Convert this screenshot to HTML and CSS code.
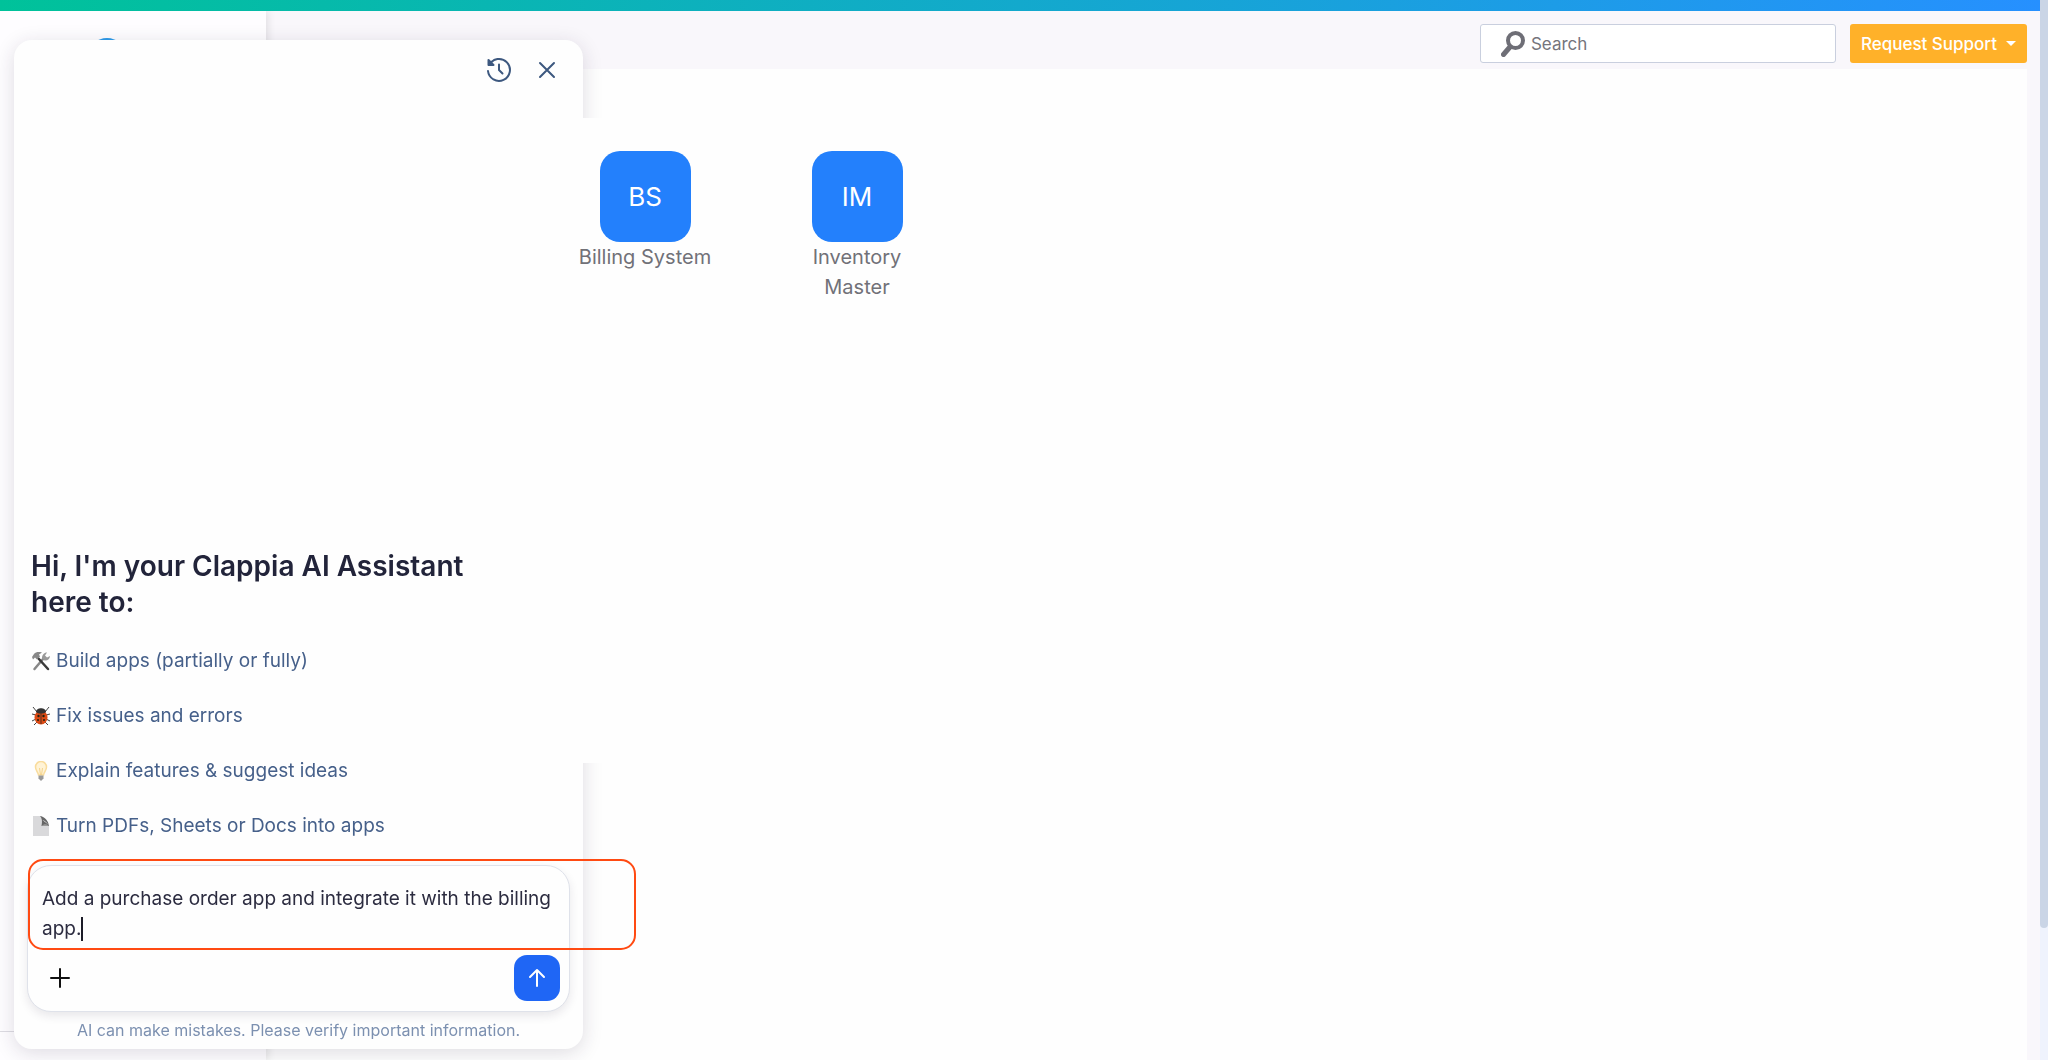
FILE: index.html
```html
<!DOCTYPE html>
<html lang="en">
<head>
<meta charset="utf-8">
<title>Clappia</title>
<link rel="stylesheet" href="styles.css">
</head>
<body>
<div class="page">
  <div class="window">
    <div class="topbar"></div>
    <div class="shell">
      <aside class="sidebar">
        <span class="logo"></span>
        <div class="sidebar-foot"></div>
      </aside>
      <div class="main">
        <header class="header">
          <label class="search">
            <svg class="search-icon" viewBox="0 0 24 26" aria-hidden="true"><circle cx="14.500" cy="9.500" r="7.500" fill="none" stroke="currentColor" stroke-width="4"/><path d="M8.500 16.500L2.500 23.500" stroke="currentColor" stroke-width="5" stroke-linecap="round"/></svg>
            <input class="search-input" type="search" placeholder="Search" aria-label="Search">
          </label>
          <button class="support" type="button">Request Support<span class="support-caret"></span></button>
        </header>
        <main class="content">
          <section class="apps">
            <a class="app" href="#"><span class="app-tile">BS</span><span class="app-name">Billing System</span></a>
            <a class="app" href="#"><span class="app-tile">IM</span><span class="app-name">Inventory Master</span></a>
          </section>
        </main>
      </div>
    </div>
  </div>
  <div class="scroll-track"><div class="scroll-thumb"></div></div>
</div>

<section class="assistant">
  <div class="assistant-bar">
    <button class="icon-button" type="button" aria-label="History">
      <svg viewBox="0 0 28 28" width="28" height="28" fill="none" stroke="currentColor" stroke-width="2" stroke-linecap="round" stroke-linejoin="round"><path d="M4.200 8.800A11 11 0 1 1 3 15"/><path d="M3.500 4v5h5z" fill="currentColor"/><path d="M14 8.500v5.500l3.500 3.500"/></svg>
    </button>
    <button class="icon-button" type="button" aria-label="Close">
      <svg viewBox="0 0 28 28" width="28" height="28" fill="none" stroke="currentColor" stroke-width="2" stroke-linecap="round"><path d="M7 7l14 14M21 7L7 21"/></svg>
    </button>
  </div>
  <div class="intro">
    <h1 class="intro-title">Hi, I'm your Clappia AI Assistant here to:</h1>
    <ul class="skills">
      <li class="skill">
        <svg class="skill-icon" viewBox="0 0 20 20" aria-hidden="true"><path d="M3.500 18L12 8" stroke="#888" stroke-width="2.500" stroke-linecap="round"/><path d="M11 7c0-3 2-5.500 5-5.500l-2 3 2 2 3-1.500c0 3-2.500 5-5.500 4.500z" fill="#999"/><path d="M7 7l10 11" stroke="#3a3a3a" stroke-width="2.500" stroke-linecap="round"/><path d="M1 6l2-3c2-2 4-2.500 8-1.500L8 3.500l1 2-3 3-2-2-2 2z" fill="#888"/></svg>
        Build apps (partially or fully)
      </li>
      <li class="skill">
        <svg class="skill-icon" viewBox="0 0 20 20" aria-hidden="true"><path d="M6 6L2 1M14 6l4-5M5 9L1 8M15 9l4-1M5 13l-4 2M15 13l4 2M6 16l-3 3M14 16l3 3" stroke="#444" fill="none"/><ellipse cx="10" cy="11.500" rx="6.500" ry="7" fill="#dc4a14"/><path d="M5 6c0-5 10-5 10 0-2 2-8 2-10 0z" fill="#333"/><path d="M10 7v11" stroke="#532" /><circle cx="7.500" cy="10" r="1.200" fill="#221"/><circle cx="12.500" cy="10" r="1.200" fill="#221"/><circle cx="7" cy="14" r="1" fill="#221"/><circle cx="13" cy="14" r="1" fill="#221"/></svg>
        Fix issues and errors
      </li>
      <li class="skill">
        <svg class="skill-icon" viewBox="0 0 20 20" aria-hidden="true"><path d="M7.500 14C7 11 4.500 9.500 4.500 6a5.500 5.500 0 0 1 11 0c0 3.500-2.500 5-3 8z" fill="#fff3d6" stroke="#f9dc9c" stroke-width="1.500"/><path d="M8.500 7l1 7M11.500 7l-1 7" stroke="#f5d48c" fill="none"/><path d="M7.500 14.500h5v3L10 20l-2.500-2.500z" fill="#999"/></svg>
        Explain features &amp; suggest ideas
      </li>
      <li class="skill">
        <svg class="skill-icon" viewBox="0 0 20 20" aria-hidden="true"><path d="M2 0h9l7 10v10H2z" fill="#d9d9db"/><path d="M9 0c2 2 2.500 5 1.500 10l7.500 0C17.500 5 14 1 9 0z" fill="#666"/><path d="M11.500 4C13 4 16 7 18 9z" fill="#fefefe"/><path d="M10.500 10C13 7.500 16 8 18 10z" fill="#999"/></svg>
        Turn PDFs, Sheets or Docs into apps
      </li>
    </ul>
  </div>
  <form class="composer">
    <div class="prompt">
      <textarea class="prompt-input" rows="2" aria-label="Message">Add a purchase order app and integrate it with the billing app.</textarea>
      <span class="prompt-caret"></span>
    </div>
    <div class="composer-actions">
      <button class="attach" type="button" aria-label="Attach">
        <svg viewBox="0 0 20 20" width="20" height="20" fill="none" stroke="currentColor" stroke-width="2" stroke-linecap="round"><path d="M10 1v18M1 10h18"/></svg>
      </button>
      <button class="send" type="button" aria-label="Send">
        <svg viewBox="0 0 20 20" width="20" height="20" fill="none" stroke="currentColor" stroke-width="2" stroke-linecap="round" stroke-linejoin="round"><path d="M10 18V2M3 9l7-7 7 7"/></svg>
      </button>
    </div>
    <div class="highlight"></div>
  </form>
  <p class="disclaimer">AI can make mistakes. Please verify important information.</p>
</section>
</body>
</html>
```
FILE: styles.css
```css
* {
  box-sizing: border-box;
}

body {
  margin: 0;
  font-family: Inter, "Liberation Sans", sans-serif;
  background: #f9f7fb;
  overflow: hidden;
}

button {
  font: inherit;
  color: inherit;
  border: 0;
  padding: 0;
  background: none;
}

.page {
  display: flex;
  height: 100vh;
}

.window {
  flex: 1;
  display: flex;
  flex-direction: column;
}

.topbar {
  height: 11px;
  background: linear-gradient(90deg, #00c29a, #2690ff);
}

.shell {
  flex: 1;
  display: flex;
}

.sidebar {
  width: 266px;
  padding-top: 27px;
  display: flex;
  flex-direction: column;
  justify-content: space-between;
  background: #fefdff;
  box-shadow: 2px 0 8px rgba(0, 0, 0, 0.1);
  clip-path: inset(0 -12px 0 0);
}

.logo {
  width: 38px;
  height: 38px;
  margin-left: 88px;
  border-radius: 50%;
  background: #2e9bea;
}

.sidebar-foot {
  height: 29px;
  border-top: 1px solid #dddce2;
}

.main {
  flex: 1;
  display: flex;
  flex-direction: column;
}

.header {
  height: 58px;
  padding: 13px 13px 0 0;
  display: flex;
  align-items: flex-start;
  justify-content: flex-end;
  gap: 14px;
}

.search {
  width: 356px;
  height: 39px;
  padding: 0 20px;
  display: flex;
  align-items: center;
  gap: 6px;
  border: 1px solid #c9cfde;
  border-radius: 3px;
  background: #fff;
  color: #6e6e76;
}

.search-icon {
  width: 24px;
  height: 26px;
}

.search-input {
  flex: 1;
  min-width: 0;
  padding: 0;
  border: 0;
  background: none;
  font: 17px Inter, "Liberation Sans", sans-serif;
  font-optical-sizing: none;
  color: inherit;
}

.search-input::placeholder {
  color: #75757c;
}

.support {
  height: 39px;
  padding: 0 11px;
  display: flex;
  align-items: center;
  gap: 9px;
  border-radius: 3px;
  background: #ffb129;
  color: #fff;
  font-size: 17px;
  font-weight: 500;
}

.support-caret {
  border: 5px solid transparent;
  border-top-color: #fff;
  border-bottom: 0;
}

.content {
  flex: 1;
  margin-right: 13px;
  padding-top: 49px;
  background: #fefefe;
}

.apps {
  position: relative;
  z-index: 2;
  height: 645px;
  margin-left: 273px;
  padding-top: 33px;
  display: flex;
  background: #fefefe;
}

.app {
  width: 212px;
  padding: 0 36px;
  display: flex;
  flex-direction: column;
  align-items: center;
  text-align: center;
  text-decoration: none;
  color: #717178;
}

.app:last-child {
  padding: 0 48px;
}

.app-tile {
  width: 91px;
  height: 91px;
  display: grid;
  place-items: center;
  border-radius: 20px;
  background: #2380fc;
  color: #fff;
  font-size: 26px;
}

.app-name {
  font-size: 20px;
  line-height: 30px;
}

.scroll-track {
  width: 8px;
  background: #eff3fd;
}

.scroll-thumb {
  height: 928px;
  border-radius: 0 0 4px 4px;
  background: #cad5e6;
}

.assistant {
  position: fixed;
  z-index: 1;
  top: 40px;
  bottom: 11px;
  left: 14px;
  width: 569px;
  padding: 12px 13px 7px;
  display: flex;
  flex-direction: column;
  border-radius: 18px;
  background: #fefefe;
  box-shadow: 0 4px 20px rgba(40, 30, 60, 0.15);
}

.assistant-bar {
  padding-right: 5px;
  display: flex;
  justify-content: flex-end;
  gap: 12px;
  color: #3d587f;
}

.icon-button {
  width: 36px;
  height: 36px;
  display: grid;
  place-items: center;
}

.intro {
  margin-top: auto;
  padding: 0 4px;
}

.intro-title {
  width: 460px;
  margin: 0 0 26px;
  font-size: 28px;
  font-weight: 600;
  line-height: 36px;
  color: #22243a;
}

.skills {
  margin: 0 0 24px;
  padding: 0;
  list-style: none;
  display: grid;
  gap: 25px;
}

.skill {
  display: flex;
  align-items: center;
  gap: 5px;
  font-size: 19px;
  font-optical-sizing: none;
  line-height: 30px;
  color: #46608a;
}

.skill-icon {
  width: 20px;
  height: 20px;
}

.composer {
  position: relative;
  height: 147px;
  padding: 18px 9px 10px 14px;
  display: flex;
  flex-direction: column;
  justify-content: space-between;
  border: 1px solid #dfe2ea;
  border-radius: 24px;
  background: #fefefe;
  box-shadow: 0 4px 10px rgba(40, 30, 60, 0.1);
}

.prompt {
  position: relative;
  display: flex;
}

.prompt-input {
  flex: 1;
  height: 60px;
  margin-right: -8px;
  padding: 0;
  border: 0;
  outline: 0;
  resize: none;
  overflow: hidden;
  background: none;
  font: 19px/30px Inter, "Liberation Sans", sans-serif;
  font-optical-sizing: none;
  color: #2c2c40;
}

.prompt-caret {
  position: absolute;
  left: 39px;
  top: 33px;
  width: 2px;
  height: 24px;
  background: #1c1c28;
}

.composer-actions {
  display: flex;
  justify-content: space-between;
  align-items: center;
}

.attach {
  width: 36px;
  height: 36px;
  display: grid;
  place-items: center;
  color: #111;
}

.send {
  width: 46px;
  height: 46px;
  display: grid;
  place-items: center;
  border-radius: 13px;
  background: #1f66f5;
  color: #fff;
}

.highlight {
  position: absolute;
  top: -7px;
  left: 0;
  right: -67px;
  height: 91px;
  border: 2px solid #ff4a12;
  border-radius: 15px;
  pointer-events: none;
}

.disclaimer {
  margin: 6px 0 0;
  font-size: 16px;
  line-height: 24px;
  text-align: center;
  color: #7c90b0;
}
```
